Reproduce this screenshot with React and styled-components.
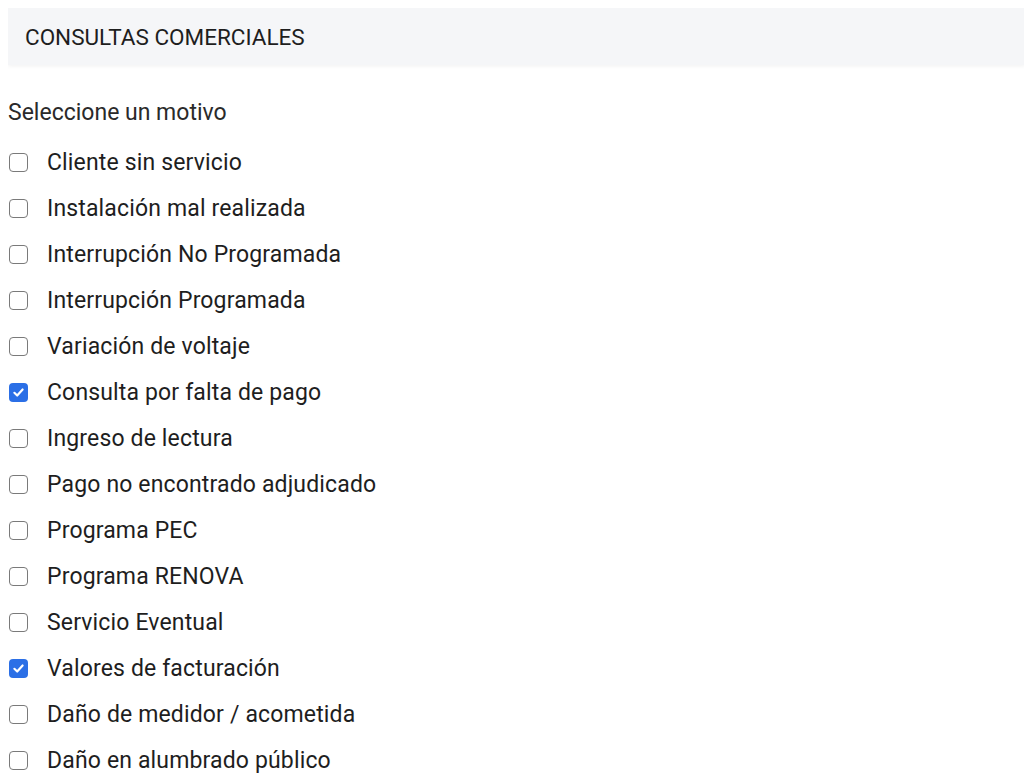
import React from 'react'
import styled, { createGlobalStyle } from 'styled-components'

const GlobalStyle = createGlobalStyle`
  body {
    margin: 8px;
    background: #fff;
    font-family: Roboto, "Liberation Sans", sans-serif;
    color: #222;
  }
`

const Header = styled.div`
  height: 57px;
  width: 1017px;
  box-sizing: border-box;
  background: #f5f6f8;
  box-shadow: 0 1px 4px rgba(0, 0, 0, 0.06);
  display: flex;
  align-items: center;
  padding-left: 17px;
  font-size: 22.5px;
  color: #1e1e1e;
`

const Prompt = styled.p`
  margin: 35px 0 0;
  font-size: 23px;
  line-height: 26px;
  color: #2a2a2a;
`

const List = styled.ul`
  list-style: none;
  margin: 23px 0 0;
  padding: 0;
  display: flex;
  flex-direction: column;
  gap: 20px;
`

const Item = styled.li`
  display: flex;
  align-items: center;
  height: 26px;
  font-size: 23px;
  letter-spacing: 0.15px;
  color: #1e1e1e;
`

const Box = styled.span`
  width: 19px;
  height: 19px;
  box-sizing: border-box;
  margin-left: 1px;
  margin-right: 19px;
  border-radius: 4px;
  border: ${p => (p.checked ? 'none' : '1.5px solid #7a7a7a')};
  background: ${p => (p.checked ? '#2b6fe6' : '#fff')};
  display: flex;
  align-items: center;
  justify-content: center;
`

const options = [
  ['Cliente sin servicio', false],
  ['Instalación mal realizada', false],
  ['Interrupción No Programada', false],
  ['Interrupción Programada', false],
  ['Variación de voltaje', false],
  ['Consulta por falta de pago', true],
  ['Ingreso de lectura', false],
  ['Pago no encontrado adjudicado', false],
  ['Programa PEC', false],
  ['Programa RENOVA', false],
  ['Servicio Eventual', false],
  ['Valores de facturación', true],
  ['Daño de medidor / acometida', false],
  ['Daño en alumbrado público', false],
]

function Check({ checked }) {
  return (
    <Box checked={checked}>
      {checked && (
        <svg width="13" height="13" viewBox="0 0 12 12">
          <path d="M2.2 6.3 L4.8 8.8 L9.8 3.2" fill="none" stroke="#fff" strokeWidth="2" strokeLinecap="round" strokeLinejoin="round" />
        </svg>
      )}
    </Box>
  )
}

export default function App() {
  return (
    <>
      <GlobalStyle />
      <Header>CONSULTAS COMERCIALES</Header>
      <Prompt>Seleccione un motivo</Prompt>
      <List>
        {options.map(([label, checked]) => (
          <Item key={label}>
            <Check checked={checked} />
            {label}
          </Item>
        ))}
      </List>
    </>
  )
}
